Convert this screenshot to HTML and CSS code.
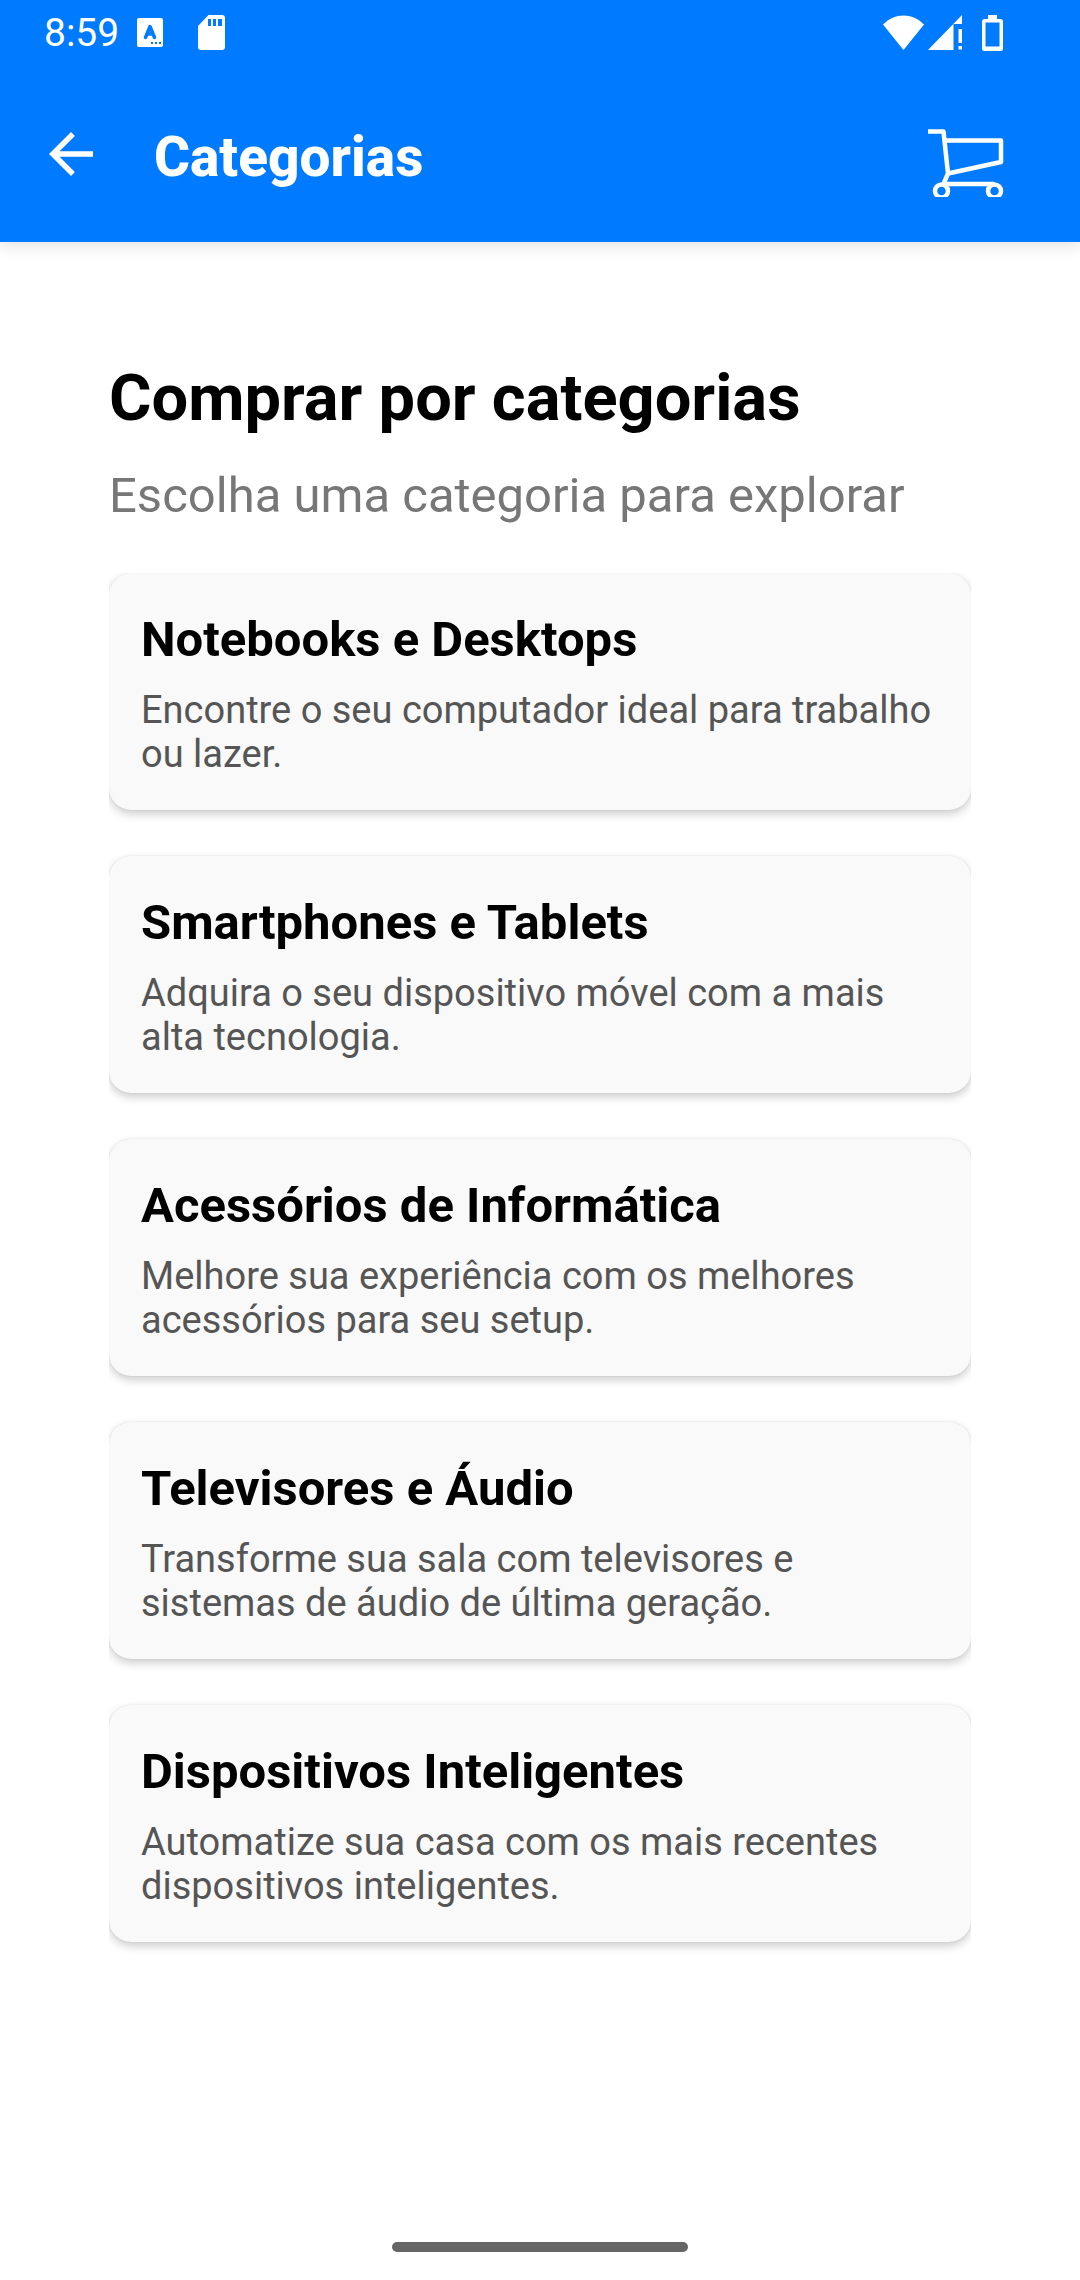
FILE: index.html
```html
<!DOCTYPE html>
<html lang="pt-BR">
<head>
<meta charset="utf-8">
<meta name="viewport" content="width=device-width, initial-scale=1">
<title>Categorias</title>
<link rel="stylesheet" href="styles.css">
</head>
<body>
<header class="top">
  <div class="status">
    <div class="status-group">
      <span class="clock">8:59</span>
      <svg class="icon-input" width="26" height="29" viewBox="0 0 26 29" aria-hidden="true">
        <rect width="26" height="29" rx="2" fill="#fff"/>
        <path d="M8.500 19.500 13 8.500 17.500 19.500M10 16H16" fill="none" stroke="#007bff" stroke-width="3.500" stroke-linecap="round" stroke-linejoin="round"/>
        <path d="M14 24h2v2h-2zM18 24h2v2h-2zM22 24h2v2h-2z" fill="#007bff"/>
      </svg>
      <svg width="27" height="35" viewBox="0 0 27 35" aria-hidden="true">
        <path d="M10.500 0H24a3 3 0 0 1 3 3V32a3 3 0 0 1-3 3H3a3 3 0 0 1-3-3V11z" fill="#fff"/>
        <path d="M10 4h3v7h-3zM15 4h3v7h-3zM20 4h4v7h-4z" fill="#007bff"/>
      </svg>
    </div>
    <div class="status-group status-right">
      <svg width="41" height="35" viewBox="0 0 41 35" aria-hidden="true"><path d="M20.500 35 0 9.500C6 3.500 13 .5 20.500.5S35 3.500 41 9.500z" fill="#fff"/></svg>
      <svg class="icon-signal" width="34" height="35" viewBox="0 0 34 35" aria-hidden="true"><path d="M34 0V9H25.500V35H0zM30.500 14H34V28H30.500zM30.500 31H34V34.500H30.500z" fill="#fff"/></svg>
      <svg width="21" height="36" viewBox="0 0 21 36" aria-hidden="true"><path fill-rule="evenodd" d="M6 0h9v4h3.500A2.500 2.500 0 0 1 21 6.500v27a2.500 2.500 0 0 1-2.500 2.500h-16A2.500 2.500 0 0 1 0 33.500v-27A2.500 2.500 0 0 1 2.500 4H6zM3.500 7.500v24h14v-24z" fill="#fff"/></svg>
    </div>
  </div>
  <div class="bar">
    <button class="icon-button" type="button" aria-label="Voltar">
      <svg width="44" height="44" viewBox="4 4 16 16" aria-hidden="true"><path d="M20 11H7.830l5.590-5.590L12 4l-8 8 8 8 1.410-1.410L7.830 13H20z" fill="#fff"/></svg>
    </button>
    <h1 class="title">Categorias</h1>
    <button class="icon-button cart" type="button" aria-label="Carrinho">
      <svg width="76" height="68" viewBox="0 0 76 68" aria-hidden="true">
        <g fill="none" stroke="#fff" stroke-width="4.500" stroke-linejoin="round">
          <path d="M0 2.500H15.500L20 44.500 73 33V11.500H18M20 44.500 15.500 55H66"/>
          <circle cx="13.500" cy="62" r="6.500"/><circle cx="66.500" cy="62" r="6.500"/>
        </g>
      </svg>
    </button>
  </div>
</header>
<main class="content">
  <h2 class="heading">Comprar por categorias</h2>
  <p class="subheading">Escolha uma categoria para explorar</p>
  <nav class="list" aria-label="Categorias">
    <a class="card" href="#notebooks"><h3 class="card-title">Notebooks e Desktops</h3><p class="card-text">Encontre o seu computador ideal para trabalho ou lazer.</p></a>
    <a class="card" href="#smartphones"><h3 class="card-title">Smartphones e Tablets</h3><p class="card-text">Adquira o seu dispositivo móvel com a mais alta tecnologia.</p></a>
    <a class="card" href="#acessorios"><h3 class="card-title">Acessórios de Informática</h3><p class="card-text">Melhore sua experiência com os melhores acessórios para seu setup.</p></a>
    <a class="card" href="#televisores"><h3 class="card-title">Televisores e Áudio</h3><p class="card-text">Transforme sua sala com televisores e sistemas de áudio de última geração.</p></a>
    <a class="card" href="#inteligentes"><h3 class="card-title">Dispositivos Inteligentes</h3><p class="card-text">Automatize sua casa com os mais recentes dispositivos inteligentes.</p></a>
  </nav>
</main>
<footer class="system-nav"><div class="home-pill"></div></footer>
</body>
</html>
```
FILE: styles.css
```css
* {
  box-sizing: border-box;
}

body {
  display: flex;
  flex-direction: column;
  min-height: 100vh;
  margin: 0;
  background: #fff;
  color: #000;
  font-family: Roboto, "Liberation Sans", sans-serif;
}

h1, h2, h3, p {
  margin: 0;
}

svg {
  display: block;
  flex: none;
}

.top {
  background: #007bff;
  color: #fff;
  box-shadow: 0 4px 16px rgba(0, 0, 0, 0.12);
}

.status {
  display: flex;
  justify-content: space-between;
  height: 65px;
  padding: 0 77px 0 44px;
}

.status-group {
  display: flex;
  align-items: center;
}

.status-right {
  gap: 4px;
}

.clock {
  font-size: 39px;
  line-height: 44px;
}

.icon-input {
  margin: 0 35px 0 18px;
}

.icon-signal {
  margin-right: 16px;
}

.bar {
  display: flex;
  align-items: flex-start;
  height: 177px;
  padding: 61px 76px 0 49px;
}

.icon-button {
  padding: 6px 0;
  border: 0;
  background: none;
  cursor: pointer;
}

.title {
  flex: 1;
  margin-left: 61px;
  font-size: 55px;
  font-weight: 800;
  line-height: 62px;
}

.cart {
  padding: 3px 0;
}

.content {
  flex: 1;
  padding: 117px 109px 0;
}

.heading {
  margin-bottom: 30px;
  font-size: 65px;
  line-height: 78px;
}

.subheading {
  margin-bottom: 48px;
  color: #777;
  font-size: 49px;
  line-height: 58px;
}

/* Card shadows are cut at the top and sides of the scroll area */
.list {
  display: flex;
  flex-direction: column;
  gap: 46px;
  padding-bottom: 46px;
  overflow: hidden;
}

.card {
  padding: 36px 32px 34px;
  border-radius: 22px;
  background: #f9f9f9;
  box-shadow: 0 4px 10px rgba(0, 0, 0, 0.2), 0 0 2px rgba(0, 0, 0, 0.1);
  color: inherit;
  text-decoration: none;
}

.card-title {
  margin-bottom: 17px;
  font-size: 49px;
  line-height: 62px;
}

.card-text {
  color: #555;
  font-size: 38px;
  line-height: 44px;
}

.system-nav {
  display: flex;
  justify-content: center;
  padding-bottom: 28px;
}

.home-pill {
  width: 296px;
  height: 10px;
  border-radius: 5px;
  background: #666;
}
```
